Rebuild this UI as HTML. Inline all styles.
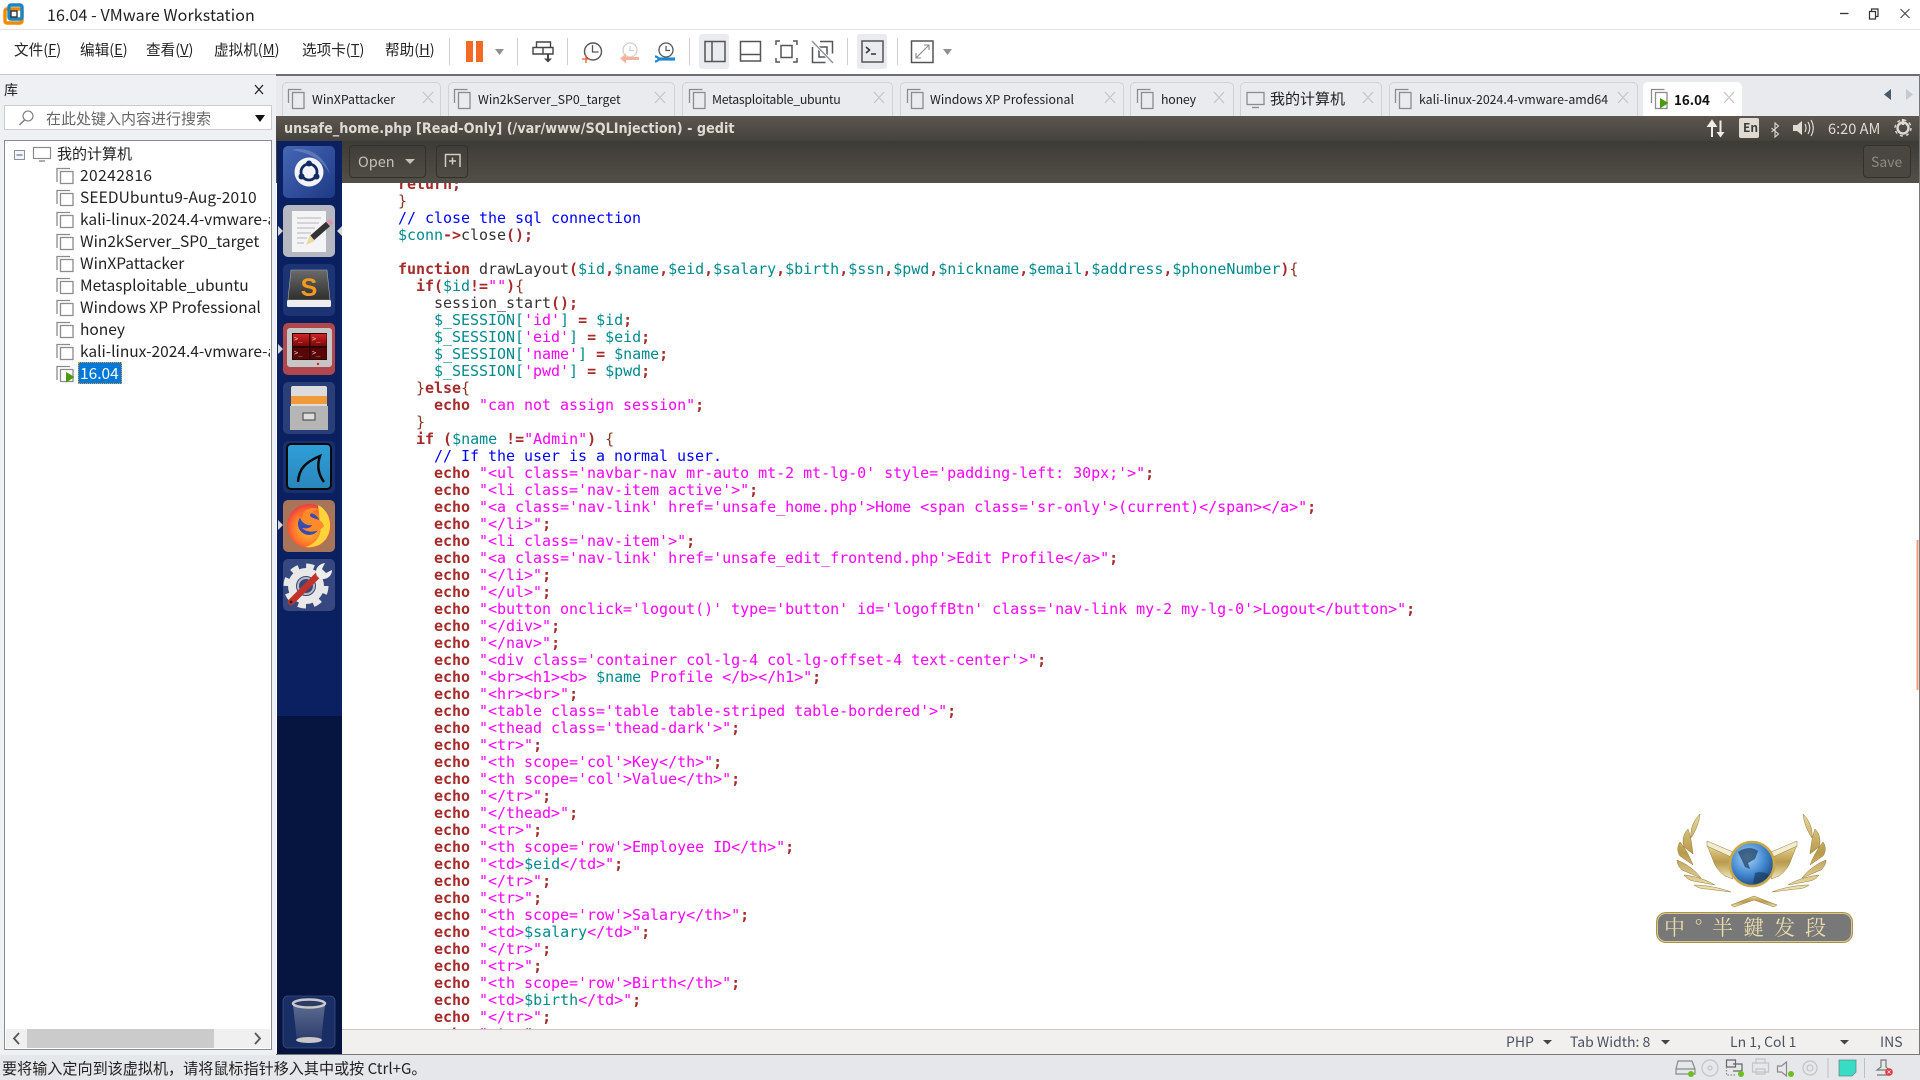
<!DOCTYPE html>
<html><head><meta charset="utf-8"><title>16.04 - VMware Workstation</title>
<style>
*{margin:0;padding:0;box-sizing:border-box}
html,body{width:1920px;height:1080px;overflow:hidden;background:#fff}
body{position:relative;font-family:"Noto Sans CJK SC","Liberation Sans",sans-serif;color:#111}
.a{position:absolute}
.t{position:absolute;white-space:nowrap;line-height:1}
.m{font-size:14.6px;top:43px;color:#222}
.m u{text-decoration:underline}
.tab{position:absolute;top:82px;height:34px;background:#e9ebee;border:1px solid #cfd2d6;border-bottom:0;border-radius:5px 5px 0 0}
.tl{position:absolute;top:91px;font-size:12.35px;line-height:16px;white-space:nowrap;color:#222}
.row{position:absolute;left:80px;font-size:15.5px;line-height:20px;white-space:nowrap;color:#222;width:190px;overflow:hidden}
#code{position:absolute;left:342px;top:183px;width:1575px;height:846px;overflow:hidden;background:#fff}
#code pre{position:absolute;left:56px;top:-7px;font-family:"DejaVu Sans Mono","Liberation Mono",monospace;font-size:15px;line-height:17px;letter-spacing:-.03px;color:#333}
.k{color:#a52a2a;font-weight:bold}.v{color:#008a8c}.s{color:#f0f}.c{color:#00f}.b{color:#8a3324}
.gs{position:absolute;top:1034px;font-size:14px;line-height:16px;color:#4c5260;white-space:nowrap}
</style></head><body>

<!-- title bar + toolbar -->
<div class="a" style="left:0;top:29px;width:1920px;height:1px;background:#e2e2e2"></div>
<div class="t" style="left:47px;top:5.500px;font-size:16px;color:#222;letter-spacing:.1px">16.04 - VMware Workstation</div>
<div class="t m" style="left:14px">文件(<u>F</u>)</div>
<div class="t m" style="left:80px">编辑(<u>E</u>)</div>
<div class="t m" style="left:146px">查看(<u>V</u>)</div>
<div class="t m" style="left:214px">虚拟机(<u>M</u>)</div>
<div class="t m" style="left:302px">选项卡(<u>T</u>)</div>
<div class="t m" style="left:385px">帮助(<u>H</u>)</div>
<div class="a" style="left:699px;top:34px;width:30px;height:35px;background:#e9ebee;border-radius:3px"></div>
<div class="a" style="left:857px;top:34px;width:30px;height:35px;background:#e9ebee;border-radius:3px"></div>

<!-- sidebar -->
<div class="a" style="left:0;top:74px;width:276px;height:982px;background:#eef0f3"></div>
<div class="a" style="left:0;top:74px;width:276px;height:1px;background:#c6c6c6"></div>
<div class="t" style="left:4px;top:83px;font-size:14px;color:#222">库</div>
<div class="a" style="left:4px;top:105px;width:268px;height:25px;background:#fff;border:1px solid #ccc"></div>
<div class="t" style="left:46px;top:111px;font-size:15px;color:#666">在此处键入内容进行搜索</div>
<div class="a" style="left:4px;top:140px;width:268px;height:910px;background:#fff;border:1px solid #8b8c94"></div>
<div class="t" style="left:57px;top:146px;font-size:15px;color:#222">我的计算机</div>
<div class="row" style="top:165px;letter-spacing:.45px">20242816</div>
<div class="row" style="top:187px;letter-spacing:.12px">SEEDUbuntu9-Aug-2010</div>
<div class="row" style="top:209px">kali-linux-2024.4-vmware-amd64</div>
<div class="row" style="top:231px">Win2kServer_SP0_target</div>
<div class="row" style="top:253px">WinXPattacker</div>
<div class="row" style="top:275px">Metasploitable_ubuntu</div>
<div class="row" style="top:297px">Windows XP Professional</div>
<div class="row" style="top:319px">honey</div>
<div class="row" style="top:341px">kali-linux-2024.4-vmware-amd64</div>
<div class="a" style="left:78px;top:362px;width:44px;height:22px;background:#0078d7;border:1px dotted #e8a030"></div>
<div class="row" style="top:363px;color:#fff;width:42px">16.04</div>
<div class="a" style="left:6px;top:1029px;width:264px;height:19px;background:#f0f0f0"></div>
<div class="a" style="left:27px;top:1029px;width:187px;height:19px;background:#cbcbcb"></div>

<!-- tab bar -->
<div class="a" style="left:276px;top:74px;width:1644px;height:42px;background:#e8eaed"></div>
<div class="a" style="left:276px;top:74px;width:1644px;height:1.5px;background:#6b6e73"></div>
<div class="tab" style="left:282px;width:159px"></div><div class="tl" style="left:312px">WinXPattacker</div>
<div class="tab" style="left:448px;width:227px"></div><div class="tl" style="left:478px">Win2kServer_SP0_target</div>
<div class="tab" style="left:682px;width:211px"></div><div class="tl" style="left:712px;letter-spacing:-.28px">Metasploitable_ubuntu</div>
<div class="tab" style="left:900px;width:224px"></div><div class="tl" style="left:930px">Windows XP Professional</div>
<div class="tab" style="left:1130px;width:104px"></div><div class="tl" style="left:1161px;letter-spacing:-.2px">honey</div>
<div class="tab" style="left:1240px;width:142px"></div><div class="tl" style="left:1270px;font-size:15px">我的计算机</div>
<div class="tab" style="left:1389px;width:249px"></div><div class="tl" style="left:1419px">kali-linux-2024.4-vmware-amd64</div>
<div class="tab" style="left:1643px;width:99px;background:#fff;border-color:#fff"></div><div class="tl" style="left:1674px;font-size:13.4px;font-weight:bold;color:#111">16.04</div>

<!-- gedit -->
<div class="a" style="left:276px;top:116px;width:1644px;height:25px;background:linear-gradient(#5b574f,#45423c)"></div>
<div class="a" style="left:276px;top:141px;width:1644px;height:42px;background:linear-gradient(#3d3b36,#524f47)"></div>
<div class="t" style="left:284px;top:121.500px;font-size:14.25px;font-weight:bold;color:#dfdbd2;font-family:'DejaVu Sans Condensed','Liberation Sans',sans-serif;line-height:15px">unsafe_home.php [Read-Only] (/var/www/SQLInjection) - gedit</div>
<div class="t" style="left:1828px;top:120.500px;font-size:14.6px;color:#dfdbd2;line-height:16px">6:20 AM</div>
<div class="a" style="left:1739px;top:118px;width:20px;height:20px;background:#dfdbd2;border-radius:2px"></div>
<div class="t" style="left:1743px;top:122px;font-size:12px;font-weight:bold;color:#3c3b37;line-height:12px">En</div>
<div class="a" style="left:349px;top:145px;width:77px;height:33px;border:1px solid #33312c;border-radius:4px"></div>
<div class="t" style="left:358px;top:154px;font-size:14.5px;color:#c4c1b8;line-height:16px">Open</div>
<div class="a" style="left:436px;top:145px;width:32px;height:33px;border:1px solid #33312c;border-radius:4px"></div>
<div class="a" style="left:1863px;top:145px;width:48px;height:33px;border:1px solid #33312c;border-radius:4px;background:#4a4740"></div>
<div class="t" style="left:1871px;top:154px;font-size:14px;color:#8d8a82;line-height:16px">Save</div>

<!-- dock -->
<div class="a" style="left:277px;top:141px;width:65px;height:575px;background:#0a2060"></div>
<div class="a" style="left:277px;top:716px;width:65px;height:339px;background:#061540"></div>

<!-- editor -->
<div id="code"><pre><span class="k">return;</span>
<span class="b">}</span>
<span class="c">// close the sql connection</span>
<span class="v">$conn</span><span class="k">-&gt;</span>close<span class="k">();</span>

<span class="k">function</span> drawLayout<span class="k">(</span><span class="v">$id</span><span class="k">,</span><span class="v">$name</span><span class="k">,</span><span class="v">$eid</span><span class="k">,</span><span class="v">$salary</span><span class="k">,</span><span class="v">$birth</span><span class="k">,</span><span class="v">$ssn</span><span class="k">,</span><span class="v">$pwd</span><span class="k">,</span><span class="v">$nickname</span><span class="k">,</span><span class="v">$email</span><span class="k">,</span><span class="v">$address</span><span class="k">,</span><span class="v">$phoneNumber</span><span class="k">)</span><span class="b">{</span>
  <span class="k">if(</span><span class="v">$id</span><span class="k">!=</span><span class="s">""</span><span class="k">)</span><span class="b">{</span>
    session_start<span class="k">();</span>
    <span class="v">$_SESSION[</span><span class="s">'id'</span><span class="v">]</span> <span class="k">=</span> <span class="v">$id</span><span class="k">;</span>
    <span class="v">$_SESSION[</span><span class="s">'eid'</span><span class="v">]</span> <span class="k">=</span> <span class="v">$eid</span><span class="k">;</span>
    <span class="v">$_SESSION[</span><span class="s">'name'</span><span class="v">]</span> <span class="k">=</span> <span class="v">$name</span><span class="k">;</span>
    <span class="v">$_SESSION[</span><span class="s">'pwd'</span><span class="v">]</span> <span class="k">=</span> <span class="v">$pwd</span><span class="k">;</span>
  <span class="b">}</span><span class="k">else</span><span class="b">{</span>
    <span class="k">echo</span> <span class="s">"can not assign session"</span><span class="k">;</span>
  <span class="b">}</span>
  <span class="k">if</span> <span class="k">(</span><span class="v">$name</span> <span class="k">!=</span><span class="s">"Admin"</span><span class="k">)</span> <span class="b">{</span>
    <span class="c">// If the user is a normal user.</span>
    <span class="k">echo</span> <span class="s">"&lt;ul class='navbar-nav mr-auto mt-2 mt-lg-0' style='padding-left: 30px;'&gt;"</span><span class="k">;</span>
    <span class="k">echo</span> <span class="s">"&lt;li class='nav-item active'&gt;"</span><span class="k">;</span>
    <span class="k">echo</span> <span class="s">"&lt;a class='nav-link' href='unsafe_home.php'&gt;Home &lt;span class='sr-only'&gt;(current)&lt;/span&gt;&lt;/a&gt;"</span><span class="k">;</span>
    <span class="k">echo</span> <span class="s">"&lt;/li&gt;"</span><span class="k">;</span>
    <span class="k">echo</span> <span class="s">"&lt;li class='nav-item'&gt;"</span><span class="k">;</span>
    <span class="k">echo</span> <span class="s">"&lt;a class='nav-link' href='unsafe_edit_frontend.php'&gt;Edit Profile&lt;/a&gt;"</span><span class="k">;</span>
    <span class="k">echo</span> <span class="s">"&lt;/li&gt;"</span><span class="k">;</span>
    <span class="k">echo</span> <span class="s">"&lt;/ul&gt;"</span><span class="k">;</span>
    <span class="k">echo</span> <span class="s">"&lt;button onclick='logout()' type='button' id='logoffBtn' class='nav-link my-2 my-lg-0'&gt;Logout&lt;/button&gt;"</span><span class="k">;</span>
    <span class="k">echo</span> <span class="s">"&lt;/div&gt;"</span><span class="k">;</span>
    <span class="k">echo</span> <span class="s">"&lt;/nav&gt;"</span><span class="k">;</span>
    <span class="k">echo</span> <span class="s">"&lt;div class='container col-lg-4 col-lg-offset-4 text-center'&gt;"</span><span class="k">;</span>
    <span class="k">echo</span> <span class="s">"&lt;br&gt;&lt;h1&gt;&lt;b&gt; </span><span class="v">$name</span><span class="s"> Profile &lt;/b&gt;&lt;/h1&gt;"</span><span class="k">;</span>
    <span class="k">echo</span> <span class="s">"&lt;hr&gt;&lt;br&gt;"</span><span class="k">;</span>
    <span class="k">echo</span> <span class="s">"&lt;table class='table table-striped table-bordered'&gt;"</span><span class="k">;</span>
    <span class="k">echo</span> <span class="s">"&lt;thead class='thead-dark'&gt;"</span><span class="k">;</span>
    <span class="k">echo</span> <span class="s">"&lt;tr&gt;"</span><span class="k">;</span>
    <span class="k">echo</span> <span class="s">"&lt;th scope='col'&gt;Key&lt;/th&gt;"</span><span class="k">;</span>
    <span class="k">echo</span> <span class="s">"&lt;th scope='col'&gt;Value&lt;/th&gt;"</span><span class="k">;</span>
    <span class="k">echo</span> <span class="s">"&lt;/tr&gt;"</span><span class="k">;</span>
    <span class="k">echo</span> <span class="s">"&lt;/thead&gt;"</span><span class="k">;</span>
    <span class="k">echo</span> <span class="s">"&lt;tr&gt;"</span><span class="k">;</span>
    <span class="k">echo</span> <span class="s">"&lt;th scope='row'&gt;Employee ID&lt;/th&gt;"</span><span class="k">;</span>
    <span class="k">echo</span> <span class="s">"&lt;td&gt;</span><span class="v">$eid</span><span class="s">&lt;/td&gt;"</span><span class="k">;</span>
    <span class="k">echo</span> <span class="s">"&lt;/tr&gt;"</span><span class="k">;</span>
    <span class="k">echo</span> <span class="s">"&lt;tr&gt;"</span><span class="k">;</span>
    <span class="k">echo</span> <span class="s">"&lt;th scope='row'&gt;Salary&lt;/th&gt;"</span><span class="k">;</span>
    <span class="k">echo</span> <span class="s">"&lt;td&gt;</span><span class="v">$salary</span><span class="s">&lt;/td&gt;"</span><span class="k">;</span>
    <span class="k">echo</span> <span class="s">"&lt;/tr&gt;"</span><span class="k">;</span>
    <span class="k">echo</span> <span class="s">"&lt;tr&gt;"</span><span class="k">;</span>
    <span class="k">echo</span> <span class="s">"&lt;th scope='row'&gt;Birth&lt;/th&gt;"</span><span class="k">;</span>
    <span class="k">echo</span> <span class="s">"&lt;td&gt;</span><span class="v">$birth</span><span class="s">&lt;/td&gt;"</span><span class="k">;</span>
    <span class="k">echo</span> <span class="s">"&lt;/tr&gt;"</span><span class="k">;</span>
    <span class="k">echo</span> <span class="s">"&lt;tr&gt;"</span><span class="k">;</span></pre></div>

<!-- gedit status -->
<div class="a" style="left:342px;top:1029px;width:1578px;height:25px;background:#f1f0ee;border-top:1px solid #c9c8c5"></div>
<div class="gs" style="left:1506px">PHP</div>
<div class="gs" style="left:1570px">Tab Width: 8</div>
<div class="gs" style="left:1730px">Ln 1, Col 1</div>
<div class="gs" style="left:1880px">INS</div>
<div class="a" style="left:276px;top:1054px;width:1644px;height:1px;background:#77787c"></div>
<div class="a" style="left:1919px;top:74px;width:1px;height:981px;background:#77787c"></div>

<!-- vmware status -->
<div class="a" style="left:0;top:1055px;width:1920px;height:25px;background:#e6e7ea"></div>
<div class="a" style="left:0;top:1050px;width:276px;height:5px;background:#eef0f3"></div>
<div class="t" style="left:2px;top:1061px;font-size:15.1px;color:#222">要将输入定向到该虚拟机，请将鼠标指针移入其中或按 Ctrl+G。</div>

<!-- emblem banner text -->
<div class="a" style="left:1657px;top:913px;width:195px;height:29px;background:#787878;border:1.5px solid #d8c88c;border-radius:9px;box-shadow:0 0 0 1px #a8924e"></div>
<div class="t" style="left:1664px;top:916px;font-size:21px;color:#e8dcaa;font-family:'Noto Serif CJK SC',serif;letter-spacing:10px;line-height:22px">中°半鍵发段</div>

<!-- icons -->
<svg class="a" style="left:0;top:0;pointer-events:none" width="1920" height="1080" viewBox="0 0 1920 1080" fill="none">
<defs>
<linearGradient id="g1" x1="0" y1="0" x2="1" y2="1"><stop offset="0" stop-color="#4666b4"/><stop offset="1" stop-color="#1e3a86"/></linearGradient>
<linearGradient id="gold" x1="0" y1="0" x2="0" y2="1"><stop offset="0" stop-color="#e8d89a"/><stop offset=".5" stop-color="#b99a4a"/><stop offset="1" stop-color="#f2e6b8"/></linearGradient>
<radialGradient id="globe" cx=".4" cy=".35" r=".75"><stop offset="0" stop-color="#a8d4f5"/><stop offset=".55" stop-color="#3f86cf"/><stop offset="1" stop-color="#163a6c"/></radialGradient>
<radialGradient id="ff" cx=".5" cy=".55" r=".6"><stop offset="0" stop-color="#ffcb2e"/><stop offset=".6" stop-color="#ff7a2a"/><stop offset="1" stop-color="#e8294a"/></radialGradient>
<linearGradient id="sb" x1="0" y1="0" x2="0" y2="1"><stop offset="0" stop-color="#6a6a6a"/><stop offset="1" stop-color="#2e2e2e"/></linearGradient>
<linearGradient id="ws" x1="0" y1="0" x2="0" y2="1"><stop offset="0" stop-color="#2f9fd8"/><stop offset="1" stop-color="#2a86bc"/></linearGradient>
<linearGradient id="tp" x1="0" y1="0" x2="0" y2="1"><stop offset="0" stop-color="#d22424"/><stop offset="1" stop-color="#7a0808"/></linearGradient>
<linearGradient id="tr" x1="0" y1="0" x2="0" y2="1"><stop offset="0" stop-color="#5a6a90"/><stop offset="1" stop-color="#2c3c6c"/></linearGradient>
</defs>
<!-- app logo -->
<rect x="5" y="9" width="17" height="14" rx="2" stroke="#f08a00" stroke-width="3.4"/>
<rect x="9" y="5" width="13" height="14" rx="2" stroke="#1a86c4" stroke-width="3.4"/>
<rect x="11" y="11" width="6" height="6" stroke="#333" stroke-width="1.4"/>
<!-- window ctrls -->
<path d="M1840 13.5h8.5" stroke="#333" stroke-width="1.3"/>
<path d="M1869.5 11.5h6v7.5h-6zM1871.5 11v-2h6.5v7.5h-2" stroke="#333" stroke-width="1.2"/>
<path d="M1900.5 9l9 9M1909.5 9l-9 9" stroke="#444" stroke-width="1"/>
<!-- sidebar close -->
<path d="M255 85l8 9M263 85l-8 9" stroke="#222" stroke-width="1.300"/>
<!-- separators -->
<path d="M449.5 38v27M517.5 38v27M567.5 38v27M689.5 38v27M847.5 38v27M897.5 38v27" stroke="#cfcfcf"/>
<!-- pause -->
<rect x="466" y="41" width="7" height="21" fill="#f46a25"/><rect x="476" y="41" width="7" height="21" fill="#f46a25"/>
<path d="M495 49h9l-4.500 6zM943 49h9l-4.500 6z" fill="#909090"/>
<!-- send keys -->
<path d="M536.500 47.500v-5.500h14v5.500M533 47.500h20v6.500h-20zM543 47.500v6.500" stroke="#444" stroke-width="1.4"/>
<path d="M548 54v5" stroke="#444" stroke-width="2"/><path d="M544 58.500h8l-4 4z" fill="#444"/>
<!-- clocks -->
<circle cx="593" cy="51.500" r="8.500" stroke="#555" stroke-width="1.400"/><path d="M592.500 45v7h6" stroke="#555" stroke-width="1.300"/>
<path d="M586 55v8M582 59h8" stroke="#e8623a" stroke-width="1.300"/>
<circle cx="630" cy="50" r="7" stroke="#cfcfcf" stroke-width="1.300"/><path d="M630 46v4.500h4" stroke="#cfcfcf" stroke-width="1.200"/>
<path d="M639 58.500h-14" stroke="#f8b49a" stroke-width="3"/><path d="M626 53.500v10l-6-5z" fill="#f8b49a"/>
<circle cx="666" cy="50" r="7" stroke="#555" stroke-width="1.300"/><path d="M666 46v4.500h4" stroke="#555" stroke-width="1.200"/>
<path d="M659 59h16" stroke="#1d8ad0" stroke-width="3.200"/><path d="M655 56.500c2 0 3 1 4 2.500-1 1.500-2 2.500-4 2.500" stroke="#1d8ad0" stroke-width="2.200"/>
<!-- layout -->
<g stroke="#555" stroke-width="1.500">
<rect x="705" y="41.500" width="20" height="20"/><path d="M712 41.500v20"/>
<rect x="740.500" y="41.500" width="20" height="19.500"/><path d="M740.500 54.500h20"/>
<path d="M776 45v-4h4M793 41h4v4M797 58v4h-4M780 62h-4v-4"/><rect x="781" y="45.500" width="11" height="12"/>
<path d="M820 41.500h12.500v12M812.500 47v15.500h13M812.500 42v1M819 47h8v8M819 47v10h7"/>
<rect x="862" y="41" width="21" height="21"/>
<rect x="911.500" y="41" width="21.500" height="21.500"/>
</g>
<path d="M812 41l21 22" stroke="#fff" stroke-width="3"/><path d="M812 41l21 22" stroke="#8b929b" stroke-width="1.400"/>
<path d="M866 47l3.500 3-3.500 3M871 54h5" stroke="#333" stroke-width="1.500"/>
<path d="M916 58l13-13M924 45h5v5M916 53v5h5" stroke="#889" stroke-width="1.100"/>
<!-- sidebar icons -->
<circle cx="28" cy="116" r="5" stroke="#777" stroke-width="1.100"/><path d="M24.500 120l-5 5" stroke="#777" stroke-width="1.300"/>
<path d="M255 115h10l-5 7z" fill="#111"/>
<rect x="14.500" y="150.500" width="10" height="9" stroke="#8a9099" fill="#f4f5f7"/><path d="M16.500 155h6" stroke="#3a5a9a"/>
<rect x="33.500" y="147.500" width="17" height="11" stroke="#8a8a8a" stroke-width="1.200"/><path d="M39 161h6" stroke="#8a8a8a" stroke-width="1.400"/>
<g stroke="#8c8c8c" stroke-width="1.300" transform="translate(0,-1)">
<path d="M57 183v-13.500h13"/><rect x="60.500" y="172.500" width="12.500" height="12"/>
<path d="M57 205v-13.500h13M57 227v-13.500h13M57 249v-13.500h13M57 271v-13.500h13M57 293v-13.500h13M57 315v-13.500h13M57 337v-13.500h13M57 359v-13.500h13M57 381v-13.500h13"/>
<rect x="60.500" y="194.500" width="12.500" height="12"/><rect x="60.500" y="216.500" width="12.500" height="12"/><rect x="60.500" y="238.500" width="12.500" height="12"/><rect x="60.500" y="260.500" width="12.500" height="12"/><rect x="60.500" y="282.500" width="12.500" height="12"/><rect x="60.500" y="304.500" width="12.500" height="12"/><rect x="60.500" y="326.500" width="12.500" height="12"/><rect x="60.500" y="348.500" width="12.500" height="12"/><rect x="60.500" y="370.500" width="12.500" height="12"/>
</g>
<path d="M66 372l8.500 5-8.500 5.500z" fill="#4c9a12"/>
<path d="M19 1033l-5 5.500 5 5.500M255 1033l5 5.500-5 5.500" stroke="#555" stroke-width="1.800"/>
<!-- tab icons -->
<g stroke="#8c8c8c" stroke-width="1.300" fill="none">
<path d="M288.500 103v-13.500h13"/><rect x="292.500" y="92.500" width="11.500" height="16"/>
<path d="M454.500 103v-13.500h13"/><rect x="458.500" y="92.500" width="11.500" height="16"/>
<path d="M689.500 103v-13.500h13"/><rect x="693.500" y="92.500" width="11.500" height="16"/>
<path d="M907.500 103v-13.500h13"/><rect x="911.500" y="92.500" width="11.500" height="16"/>
<path d="M1137.500 103v-13.500h13"/><rect x="1141.500" y="92.500" width="11.500" height="16"/>
<rect x="1247" y="92.500" width="17" height="12"/><path d="M1252 107.500h7"/>
<path d="M1395.500 103v-13.500h13"/><rect x="1399.500" y="92.500" width="11.500" height="16"/>
<path d="M1651.500 103v-13.500h13"/><rect x="1655.500" y="92.500" width="11.500" height="16"/>
</g>
<path d="M1660 98l8.500 5-8.500 5.500z" fill="#4c9a12"/>
<g stroke="#c4c6ca" stroke-width="1.300">
<path d="M423 92l10 11M433 92l-10 11M655 92l10 11M665 92l-10 11M874 92l10 11M884 92l-10 11M1105 92l10 11M1115 92l-10 11M1214 92l10 11M1224 92l-10 11M1363 92l10 11M1373 92l-10 11M1618 92l10 11M1628 92l-10 11M1724 92l10 11M1734 92l-10 11"/>
</g>
<path d="M1891 89v11l-7-5.500z" fill="#4a5a6a"/><path d="M1906 89v11l7-5.500z" fill="#c5cad0"/>
<!-- indicators -->
<path d="M1712 137v-13M1708.500 126l3.500-5 3.500 5zM1720.500 120.500v13" stroke="#efece6" stroke-width="2" fill="#efece6"/><path d="M1716.500 132h8l-4 5.500z" fill="#efece6"/>
<path d="M1771.500 124l7 6-3.500 3v-14l3.500 3-7 6" stroke="#dfdbd2" stroke-width="1.100" transform="translate(0,4)"/>
<path d="M1793 125h4l5-4v14l-5-4h-4z" fill="#dfdbd2"/><path d="M1805 124q2 4 0 8M1808 122q3.500 6 0 12M1811 120q4.500 8 0 16" stroke="#dfdbd2" stroke-width="1.200"/>
<circle cx="1903" cy="128" r="5.500" stroke="#dfdbd2" stroke-width="2.400"/><path d="M1903 119v6" stroke="#dfdbd2" stroke-width="2.400"/><circle cx="1903" cy="128" r="8" stroke="#dfdbd2" stroke-width="1.400" stroke-dasharray="3 3.300"/>
<!-- gedit toolbar -->
<path d="M405 159h10l-5 5z" fill="#c4c1b8"/>
<path d="M445.500 167v-12.500h14.500v12.500M449 161h7M452.500 157.500v7" stroke="#d0cdc4" stroke-width="1.500"/>
<!-- status arrows -->
<path d="M1543 1040h9l-4.500 4.500zM1661 1040h9l-4.500 4.500zM1840 1040h9l-4.500 4.500z" fill="#444"/>
<!-- scrollbar -->
<rect x="1916.500" y="540" width="2" height="150" fill="#f09a78"/>

<!-- dock tiles -->
<path d="M278 226l5 5-5 5zM342 226l-5 5 5 5zM278 344l5 5-5 5zM278 520l5 5-5 5z" fill="#d8d8d8"/>
<rect x="283" y="146" width="52" height="52" rx="5" fill="url(#g1)"/>
<path d="M292 150c14-4 32 4 38 24-6-10-14-20-38-24z" fill="#7f97cf" opacity=".5"/>
<circle cx="309" cy="172" r="14.500" fill="#f2f4fa"/><circle cx="309" cy="172" r="8" stroke="#142a62" stroke-width="2.800"/><circle cx="309" cy="163.500" r="3" fill="#142a62"/><circle cx="301.500" cy="176.500" r="3" fill="#142a62"/><circle cx="316.500" cy="176.500" r="3" fill="#142a62"/>
<rect x="283" y="205" width="52" height="52" rx="5" fill="#b6b8c0"/>
<rect x="292" y="211" width="34" height="41" fill="#f4f4f6"/>
<path d="M297 218h24M297 223h22M297 228h18M297 233h14M297 238h10M297 243h7" stroke="#b5b5b5"/>
<path d="M312 238l16-14" stroke="#333" stroke-width="6"/><path d="M310 235l5 6-9 4z" fill="#e8d9a0"/><path d="M327 221l3-2 3.500 4-2.500 3z" fill="#e090b0"/>
<rect x="283" y="264" width="52" height="52" rx="5" fill="#1c3474"/>
<path d="M291 270h36l3 30h-42z" fill="url(#sb)" stroke="#aaa" stroke-width=".6"/><rect x="287" y="300" width="44" height="7" rx="1.500" fill="#eeeeee"/>
<text x="309" y="296" font-family="Liberation Sans,sans-serif" font-size="25" font-weight="bold" text-anchor="middle" fill="#f39a1e">S</text>
<rect x="283" y="323" width="52" height="52" rx="5" fill="#b0474d"/>
<rect x="287" y="328" width="45" height="39" rx="3" fill="#c6c6c6"/>
<rect x="292" y="333" width="35" height="27" fill="#2a0404"/>
<rect x="293" y="334" width="16" height="12" fill="url(#tp)"/><rect x="310.500" y="334" width="16" height="12" fill="url(#tp)"/><rect x="293" y="348" width="16" height="11" fill="#5a0606"/><rect x="310.500" y="348" width="16" height="11" fill="#5a0606"/>
<g font-family="DejaVu Sans Mono,monospace" font-size="7" fill="#f0d0d0"><text x="294" y="341">&gt;_</text><text x="312" y="341">&gt;_</text><text x="294" y="355">&gt;_</text><text x="312" y="355">&gt;_</text></g>
<circle cx="318" cy="364" r="1.200" fill="#e02020"/>
<rect x="283" y="382" width="52" height="52" rx="5" fill="#2a3f78"/>
<rect x="291" y="386" width="36" height="44" rx="2" fill="#dcdcdc"/><rect x="291" y="396" width="36" height="8" fill="#f09a3a"/><rect x="290" y="406" width="38" height="24" fill="#b5b5b5"/><rect x="303" y="413" width="12" height="7" stroke="#555" fill="#ddd" stroke-width="1.200"/>
<rect x="283" y="441" width="52" height="52" rx="5" fill="#18306e"/>
<rect x="287" y="444" width="44" height="45" rx="4" fill="url(#ws)" stroke="#0a0a0a" stroke-width="2"/>
<path d="M298 482c1-14 8-20 22-26-3 9-2 18 4 26" stroke="#0a0a0a" stroke-width="2.500"/>
<rect x="283" y="500" width="52" height="52" rx="5" fill="#a87558"/>
<circle cx="309" cy="526" r="22" fill="url(#ff)"/><path d="M318 505c12 6 16 22 8 34-5 7-14 9-21 8 12-3 18-14 15-24z" fill="#ffd43a"/><circle cx="309" cy="524" r="11" fill="#3a4ab0"/><path d="M300 517c5-9 14-11 20-7-5 0-10 2-10 6 4 4 12 2 14 10-4 6-16 8-22 2 5 1 9 0 10-3-5 1-11-2-12-8z" fill="#ff8a2a"/><path d="M293 512l6 4 5-7-2 9z" fill="#ff6a2a"/>
<rect x="283" y="559" width="52" height="52" rx="5" fill="#36487f"/>
<circle cx="306" cy="586" r="14" stroke="#e8e8e8" stroke-width="8"/><circle cx="306" cy="586" r="20" stroke="#e8e8e8" stroke-width="5" stroke-dasharray="8 7.700"/><circle cx="306" cy="586" r="8" stroke="#bbb" stroke-width="2"/>
<path d="M291 602l27-27" stroke="#c0322a" stroke-width="6.500" stroke-linecap="round"/><circle cx="291" cy="602" r="1.400" fill="#222"/><path d="M317 576c-3-6 1-12 8-13l-3 6 4 4 6-3c0 7-7 11-13 8z" fill="#eee"/>
<rect x="283" y="996" width="52" height="52" rx="5" fill="#1a2e66" stroke="#3c4c80" stroke-width=".8"/>
<path d="M293 1005l4 36h24l4-36z" fill="url(#tr)"/><ellipse cx="309" cy="1003.500" rx="16" ry="4" fill="#2c3c66" stroke="#c9c9c9" stroke-width="2.500"/><ellipse cx="309" cy="1040" rx="13" ry="3" fill="#c8c8c8"/>
<!-- emblem -->
<g stroke="#8f7a3a" stroke-width=".5" fill="url(#gold)">
<path d="M1700 814c-6 6-10 14-9 24 4-6 8-14 9-24zM1688 829c-5 5-6 12-4 18l9 7c-1-8-2-17-5-25zM1680 842c-3 4-3 10 0 14l13 9c-3-8-8-17-13-23zM1677 860c0 4 2 7 5 10l19 8c-5-7-14-14-24-18zM1684 875c2 3 5 5 9 6l22 4c-8-5-20-9-31-10zM1694 885c4 3 8 4 13 4l24 3c-10-4-25-7-37-7z"/>
<path d="M1803 814c6 6 10 14 9 24-4-6-8-14-9-24zM1815 829c5 5 6 12 4 18l-9 7c1-8 2-17 5-25zM1823 842c3 4 3 10 0 14l-13 9c3-8 8-17 13-23zM1826 860c0 4-2 7-5 10l-19 8c5-7 14-14 24-18zM1819 875c-2 3-5 5-9 6l-22 4c8-5 20-9 31-10zM1809 885c-4 3-8 4-13 4l-24 3c10-4 25-7 37-7z"/>
<path d="M1707 845l24 9c-1 8 0 18 2 25l-8-3c-6-4-10-10-12-16zM1797 845l-24 9c1 8 0 18-2 25l8-3c6-4 10-10 12-16z"/>
<path d="M1707 841l26 11-2 5-24-11zM1797 841l-26 11 2 5 24-11z" fill="#f3ecd0"/>
<path d="M1731 905l23-9 23 9-3 2-20-7-20 7z"/>
</g>
<circle cx="1752" cy="864" r="22" fill="url(#globe)" stroke="#c9a84a" stroke-width="2.500"/>
<path d="M1738 852c7-5 15-5 20-1l-3 8-7 4 2 6-5-2zM1755 873c6-2 12 0 14 2-4 6-10 9-16 9z" fill="#1e3c60" opacity=".7"/>
<!-- vmware status icons -->
<g stroke="#8a8a8a" stroke-width="1.200">
<path d="M1678 1061h14l3 8v5h-19v-5zM1676 1069h19"/>
<path d="M1726.500 1060h9v7h-9zM1733 1064h9v7h-9" stroke="#666"/><path d="M1726.500 1067v8h10" stroke-dasharray="1.500 1.500"/>
<path d="M1777.500 1066h4l5-4v14l-5-4h-4z"/>
</g>
<g stroke="#c4c4c4" stroke-width="1.200">
<circle cx="1710" cy="1068" r="8"/><circle cx="1710" cy="1068" r="2"/>
<path d="M1756 1063v-4h9v4M1752.500 1063h16v9h-16zM1756 1069h9v5h-9z"/>
<circle cx="1810" cy="1068" r="7"/><circle cx="1810" cy="1068" r="3"/>
</g>
<circle cx="1691" cy="1074" r="3" fill="#6cc01c"/><circle cx="1741" cy="1074" r="3" fill="#6cc01c"/><circle cx="1791" cy="1074" r="3" fill="#6cc01c"/>
<path d="M1828 1058v20M1864.500 1058v20" stroke="#bfbfbf"/>
<path d="M1839 1060h17v12l-4 4h-13z" fill="#36dcc4" stroke="#6a8a86" stroke-width=".8"/>
<path d="M1881 1060h5v7l3 3h-12l4-3zM1877 1075h12" stroke="#777" stroke-width="1.200"/>
<circle cx="1889" cy="1072" r="3.800" fill="#e8343a"/><path d="M1887.500 1070.500l3 3M1890.500 1070.500l-3 3" stroke="#fff" stroke-width=".8"/>
</svg>
</body></html>
